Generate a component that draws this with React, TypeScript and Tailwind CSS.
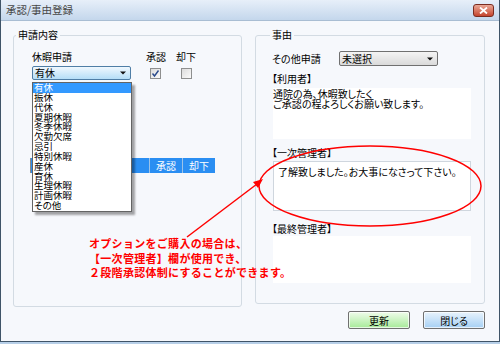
import React from 'react';

const leaveTypes = ['有休', '振休', '代休', '夏期休暇', '冬季休暇', '欠勤欠席', '忌引', '特別休暇', '産休', '育休', '生理休暇', '計画休暇', 'その他'];

const Arrow = () => (
  <svg width="6" height="4" viewBox="0 0 6 4" className="shrink-0">
    <path d="M0 0.5 H6 L3 3.5 Z" fill="#111" />
  </svg>
);

const Checkbox = ({ checked }: { checked?: boolean }) => (
  <span className="w-[11px] h-[11px] border border-[#8e8f8f] bg-gradient-to-br from-[#dcdcdc] to-[#fbfbfb] flex items-center justify-center">
    {checked && (
      <svg width="9" height="9" viewBox="0 0 9 9">
        <path d="M1.5 4.5 L3.5 7 L7.5 1.5" stroke="#2a4a8c" strokeWidth="1.4" fill="none" />
      </svg>
    )}
  </span>
);

const Btn = ({ label, tone }: { label: string; tone: 'green' | 'blue' }) => (
  <div
    className={
      tone === 'green'
        ? 'w-[62px] h-[18px] border border-[#707070] rounded-[2px] bg-gradient-to-b from-[#effcea] to-[#a6ea98] shadow-[inset_0_0_0_1px_rgba(255,255,255,0.7)] flex items-center justify-center'
        : 'w-[62px] h-[18px] border border-[#707070] rounded-[2px] bg-gradient-to-b from-[#e8f3fc] to-[#a6d0f4] shadow-[inset_0_0_0_1px_rgba(255,255,255,0.7)] flex items-center justify-center'
    }
  >
    {label}
  </div>
);

export default function App() {
  return (
    <div className="w-[500px] h-[344px] bg-[#b7cfe8] font-['Noto_Sans_CJK_JP',sans-serif] [font-feature-settings:'palt'] text-[10px] text-black">
      <div className="relative w-[500px] h-[342px] border-x border-b border-[#3f5468] bg-[#f6f8fc] flex flex-col">
        {/* title bar */}
        <div className="h-[21px] shrink-0 flex items-center justify-between bg-gradient-to-b from-[#e7eff9] to-[#c4d7ec] border-b border-[#a9bdd3] pl-[5px] pr-[5px]">
          <span className="text-[10.5px] text-[#474747] leading-none">承認/事由登録</span>
          <div className="w-[21px] h-[13px] rounded-[3px] border border-[#7a2c20] bg-gradient-to-b from-[#e9a796] to-[#c4432d] flex items-center justify-center">
            <svg width="9" height="7" viewBox="0 0 9 7">
              <path d="M1 0.5 L8 6.5 M8 0.5 L1 6.5" stroke="#fff" strokeWidth="1.8" />
            </svg>
          </div>
        </div>

        <div className="flex pt-[8px] pl-[12px]">
          {/* 申請内容 */}
          <fieldset className="relative w-[229px] h-[278px] border border-[#d3dbe3] rounded-[3px]">
            <legend className="ml-[2px] px-[2px] leading-[12px]">申請内容</legend>
            <div className="pl-[18px]">
              <div className="mt-[10px] flex leading-[12px]">
                <span className="w-[114px]">休暇申請</span>
                <span className="w-[30px]">承認</span>
                <span>却下</span>
              </div>
              <div className="mt-[3px] flex items-start">
                <div className="relative w-[99px] h-[14px]">
                  <div className="h-full border border-[#4f7ea6] rounded-[2px] bg-gradient-to-b from-[#f0f8fe] to-[#b5def7] flex items-center justify-between pl-[2px] pr-[4px] leading-none">
                    <span>有休</span>
                    <Arrow />
                  </div>
                  <div className="absolute left-0 top-[16px] w-[100px] border border-[#646464] bg-white shadow-[3px_3px_2px_rgba(0,0,0,0.35)] text-[9.5px]">
                    {leaveTypes.map((t, i) => (
                      <div
                        key={t}
                        className={i === 0 ? 'h-[9.85px] leading-[9.85px] pl-[1px] bg-[#3399ff] text-white' : 'h-[9.85px] leading-[9.85px] pl-[1px]'}
                      >
                        {t}
                      </div>
                    ))}
                  </div>
                </div>
                <div className="ml-[19px] mt-[2px]">
                  <Checkbox checked />
                </div>
                <div className="ml-[20px] mt-[2px]">
                  <Checkbox />
                </div>
              </div>
              <div className="mt-[78px] -ml-[2px] w-[185px] h-[15px] flex bg-[#2a8ef2] border-l border-[#8a8a8a] text-white leading-none">
                <div className="w-[118px]" />
                <div className="w-[33px] border-l border-[#9cc3e8] flex items-center justify-center">承認</div>
                <div className="w-[33px] border-l border-[#9cc3e8] flex items-center justify-center">却下</div>
              </div>
            </div>
          </fieldset>

          {/* 事由 */}
          <fieldset className="ml-[13px] w-[230px] h-[275px] border border-[#d3dbe3] rounded-[3px]">
            <legend className="ml-[14px] px-[2px] leading-[12px]">事由</legend>
            <div className="pl-[16px]">
              <div className="mt-[10px] flex items-center">
                <span className="w-[67px] leading-[12px]">その他申請</span>
                <div className="w-[99px] h-[15px] border border-[#707070] rounded-[2px] bg-gradient-to-b from-[#f4f4f4] to-[#dadada] flex items-center justify-between pl-[2px] pr-[4px] leading-none">
                  <span>未選択</span>
                  <Arrow />
                </div>
              </div>
              <div className="mt-[7px] leading-[12px]">【利用者】</div>
              <div className="mt-[3px] ml-[1px] w-[198px] h-[51px] bg-white pt-[1px] leading-[10px]">
                通院の為、休暇致したく
                <br />
                ご承認の程よろしくお願い致します。
              </div>
              <div className="mt-[8px] leading-[12px]">【一次管理者】</div>
              <div className="mt-[2px] ml-[1px] w-[198px] h-[50px] bg-white border border-[#cfd6de] pl-[4px] pt-[4px] leading-[12px]">
                了解致しました。お大事になさって下さい。
              </div>
              <div className="mt-[12px] leading-[12px]">【最終管理者】</div>
              <div className="mt-[1px] ml-[1px] w-[198px] h-[47px] bg-white" />
            </div>
          </fieldset>
        </div>

        <div className="mt-[4px] pr-[14px] flex justify-end gap-[13px]">
          <Btn label="更新" tone="green" />
          <Btn label="閉じる" tone="blue" />
        </div>

        {/* annotation */}
        <svg className="absolute left-[-1px] top-0 pointer-events-none" width="500" height="344" viewBox="0 0 500 344">
          <ellipse cx="370" cy="186" rx="111" ry="40" fill="none" stroke="#ff0000" strokeWidth="1.5" />
          <line x1="187" y1="237" x2="257" y2="184" stroke="#ff0000" strokeWidth="1.5" />
          <path d="M263 179 L253 182 L258 188 Z" fill="#ff0000" />
        </svg>
        <div className="absolute left-[88px] top-[236px] text-[11px] leading-[14.5px] tracking-[0.3px] text-[#ff0000] font-semibold [font-feature-settings:normal]">
          <div>オプションをご購入の場合は、</div>
          <div>【一次管理者】欄が使用でき、</div>
          <div>２段階承認体制にすることができます。</div>
        </div>
      </div>
    </div>
  );
}
